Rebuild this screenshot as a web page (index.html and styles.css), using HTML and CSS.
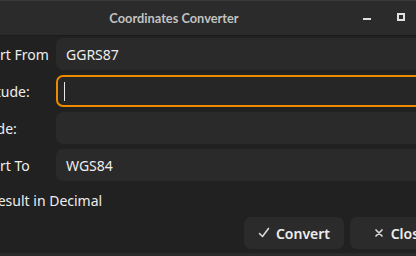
FILE: index.html
```html
<!DOCTYPE html>
<html>
<head>
<meta charset="utf-8">
<link rel="stylesheet" href="styles.css">
</head>
<body>
<div class="window">
  <div class="topline"></div>
  <header class="titlebar">
    <span class="title">Coordinates Converter</span>
    <div class="wm-buttons">
      <span class="wm-btn"><svg width="8" height="8" viewBox="0 0 8 8"><rect x="0" y="5" width="8" height="2" fill="#e0e0e0"/></svg></span>
      <span class="wm-btn"><svg width="8" height="8" viewBox="0 0 8 8"><rect x="1" y="1" width="6" height="6" fill="none" stroke="#e0e0e0" stroke-width="2"/></svg></span>
      <span class="wm-btn"><svg width="8" height="8" viewBox="0 0 8 8"><path d="M0 0L8 8M8 0L0 8" stroke="#e0e0e0" stroke-width="2"/></svg></span>
    </div>
  </header>
  <main class="content">
    <div class="form">
      <label class="label">Convert From</label>
      <div class="entry"><span class="value">GGRS87</span></div>
      <label class="label">Longitude:</label>
      <div class="entry focused"><span class="cursor"></span></div>
      <label class="label">Latitude:</label>
      <div class="entry"></div>
      <label class="label">Convert To</label>
      <div class="entry"><span class="value">WGS84</span></div>
    </div>
    <div class="check-row">
      <span class="checkbox"></span>
      <span class="check-label">Result in Decimal</span>
    </div>
    <div class="actions">
      <button class="btn"><svg class="btn-icon" width="12" height="12" viewBox="0 0 12 12"><path d="M1.5 6.5L4.5 9.5L10.5 1.5" fill="none" stroke="#d8d8d8" stroke-width="1.6" stroke-linecap="round" stroke-linejoin="round"/></svg><span>Convert</span></button>
      <button class="btn"><svg class="btn-icon" width="12" height="12" viewBox="0 0 12 12"><path d="M3 3L9 9M9 3L3 9" fill="none" stroke="#d8d8d8" stroke-width="1.7" stroke-linecap="round"/></svg><span>Close</span></button>
    </div>
  </main>
  <div class="bottomline"></div>
</div>
</body>
</html>
```
FILE: styles.css
```css
html, body {
  margin: 0;
  padding: 0;
  width: 416px;
  height: 256px;
  overflow: hidden;
  background: #212121;
}
body {
  font-family: "Noto Sans", "DejaVu Sans", sans-serif;
  color: #eeeeee;
}
.window {
  margin-left: -102px;
  width: 552px;
  height: 256px;
  display: flex;
  flex-direction: column;
  background: #212121;
}
.topline {
  height: 1px;
  background: #3a3a3a;
}
.titlebar {
  height: 34px;
  background: #2b2b2b;
  border-bottom: 1px solid #1b1b1b;
  display: flex;
  align-items: center;
  justify-content: center;
  position: relative;
}
.title {
  font-family: "Lato", "Noto Sans", sans-serif;
  font-weight: bold;
  font-size: 12.8px;
  color: #c2c2c2;
}
.wm-buttons {
  position: absolute;
  right: 11px;
  top: 12px;
  display: flex;
  gap: 26px;
}
.wm-btn {
  width: 8px;
  height: 8px;
  display: flex;
}
.content {
  flex: 1;
  display: flex;
  flex-direction: column;
  padding: 2px 0 0 0;
}
.form {
  display: grid;
  grid-template-columns: 158px 1fr;
  row-gap: 5px;
  align-items: center;
}
.label {
  font-size: 14px;
  padding-left: 61px;
  color: #eeeeee;
  white-space: nowrap;
}
.entry {
  height: 32px;
  box-sizing: border-box;
  background: #2a2a2a;
  border-radius: 7px;
  display: flex;
  align-items: center;
  padding-left: 10px;
  font-size: 14px;
}
.entry.focused {
  border: 2px solid #ee8a00;
  background: #262626;
  padding-left: 6px;
}
.cursor {
  width: 1px;
  height: 19px;
  background: #e8e8e8;
}
.check-row {
  display: flex;
  align-items: center;
  height: 26px;
  margin-top: 6px;
  padding-left: 66px;
  gap: 11px;
}
.checkbox {
  width: 14px;
  height: 14px;
  border-radius: 3px;
  background: #2e2e2e;
}
.check-label {
  font-size: 14px;
}
.actions {
  display: flex;
  gap: 6px;
  margin-top: 4px;
  padding-left: 346px;
}
.btn {
  height: 32px;
  width: 102px;
  border: none;
  border-radius: 7px;
  background: #2b2b2b;
  color: #eeeeee;
  font-family: inherit;
  font-size: 14px;
  font-weight: 600;
  display: flex;
  align-items: center;
  justify-content: center;
  gap: 6px;
  padding: 0;
}
.btn-icon {
  flex: none;
}
.bottomline {
  height: 3px;
  background: #2a2a2a;
}
```
